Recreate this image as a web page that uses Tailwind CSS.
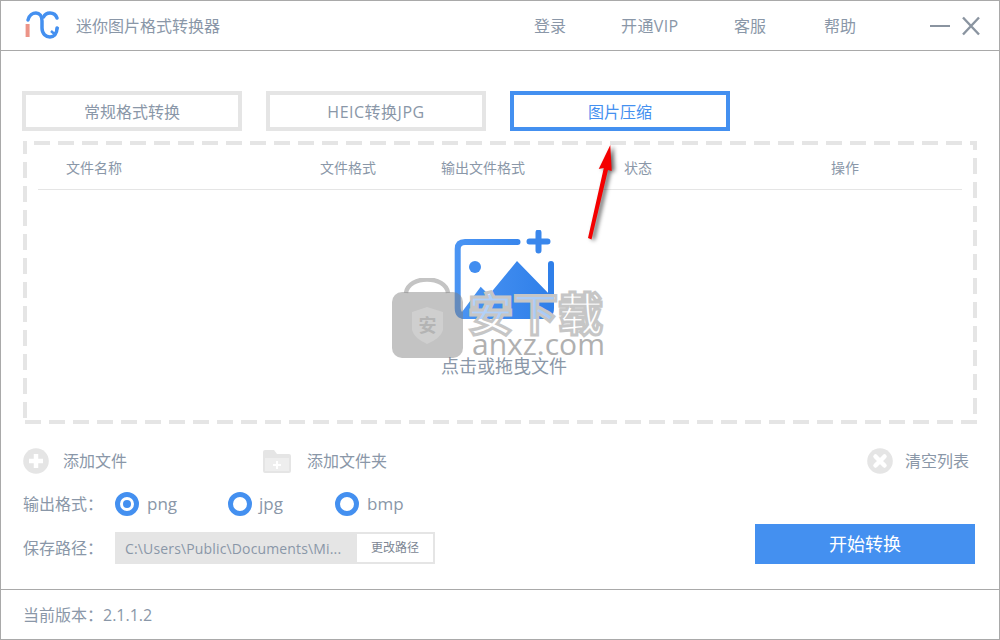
<!DOCTYPE html>
<html lang="zh"><head><meta charset="utf-8">
<script src="https://cdn.jsdelivr.net/npm/@tailwindcss/browser@4"></script>
<title>迷你图片格式转换器</title></head>
<body class="m-0 bg-white">
<div class="relative w-[1000px] h-[640px] overflow-hidden bg-white border border-[#a9a9a9] flex flex-col text-[#8a97a8] font-['Open_Sans','Noto_Sans_CJK_SC',sans-serif]">
  <!-- title bar -->
  <header class="h-[50px] shrink-0 flex items-center border-b border-[#a9a9a9] pl-[23px]">
    <svg class="w-[36px] h-[30px] -mt-[1px]" viewBox="0 0 36 30" fill="none">
      <path d="M3.600 14V27" stroke="#ec9488" stroke-width="4"/>
      <path d="M4 10C5 5 9 3 12 3C15.500 3 18 6 18 11V18C18 24 22 27 26 27C30 27 33 24 33 18" stroke="#4490f0" stroke-width="3.500" stroke-linecap="round"/>
      <path d="M19.500 7C21 4 24 3 26 3C29 3 32 5 33 8" stroke="#4490f0" stroke-width="3.500" stroke-linecap="round"/>
      <path d="M27 21L31 24.500L34 17" stroke="#4490f0" stroke-width="2.500"/>
    </svg>
    <span class="ml-[16px] text-[16px] leading-[24px] w-[150px] whitespace-nowrap">迷你图片格式转换器</span>
    <nav class="ml-[308px] flex text-[16px] leading-[24px] whitespace-nowrap">
      <span class="w-[87px]">登录</span><span class="w-[113px] tracking-[0.4px]">开通VIP</span><span class="w-[90px]">客服</span><span class="w-[106px]">帮助</span>
    </nav>
    <svg class="w-[20px] h-[20px]" viewBox="0 0 20 20"><path d="M0 10H20" stroke="#8a94a0" stroke-width="2"/></svg>
    <svg class="w-[20px] h-[20px] ml-[11px]" viewBox="0 0 20 20"><path d="M2 1.500L18 18.500M18 1.500L2 18.500" stroke="#8a94a0" stroke-width="2.400"/></svg>
  </header>

  <main class="flex-1 relative pt-[40px] pl-[21px]">
    <div class="flex gap-[24px] text-[16px]">
      <div class="w-[220px] h-[40px] pt-[1px] border-4 border-[#e5e5e5] flex items-center justify-center">常规格式转换</div>
      <div class="w-[220px] h-[40px] pt-[1px] border-4 border-[#e5e5e5] flex items-center justify-center tracking-[0.5px]">HEIC转换JPG</div>
      <div class="w-[220px] h-[40px] pt-[1px] border-4 border-[#4490f0] flex items-center justify-center text-[#4490f0]">图片压缩</div>
    </div>

    <section class="relative mt-[10px] ml-[1px] w-[954px] h-[283px] flex flex-col">
      <svg class="absolute inset-0 w-[954px] h-[283px]" viewBox="0 0 954 283" fill="none" stroke="#e5e5e5" stroke-width="4" stroke-dasharray="16 8">
        <path d="M0 2H954" stroke-dashoffset="13"/>
        <path d="M952 0V283" stroke-dashoffset="7"/>
        <path d="M0 281H954" stroke-dashoffset="22"/>
        <path d="M2 0V283" stroke-dashoffset="3"/>
      </svg>
      <div class="mt-[15px] ml-[15px] mr-[15px] h-[34px] border-b border-[#e5e5e5] flex text-[14px] leading-[24px] whitespace-nowrap">
        <span class="ml-[28px] w-[254px]">文件名称</span><span class="w-[121px]">文件格式</span><span class="w-[183px]">输出文件格式</span><span class="w-[207px]">状态</span><span>操作</span>
      </div>
      <div class="flex-1 flex flex-col items-center pl-[8px]">
        <svg class="mt-[40px] w-[100px] h-[90px]" viewBox="0 0 100 90" fill="none">
          <defs><linearGradient id="g" x1="0" y1="0" x2="1" y2="0"><stop offset="0" stop-color="#4a94f3"/><stop offset="1" stop-color="#2f7fe9"/></linearGradient></defs>
          <path d="M63.500 12H11Q3.700 12 3.700 19V78Q3.700 86 11 86H90Q97 86 97 78V34" stroke="url(#g)" stroke-width="6" stroke-linecap="round"/>
          <path d="M75.500 11.500H93.500M84.500 2.500V20.500" stroke="#3a87ec" stroke-width="6" stroke-linecap="round"/>
          <circle cx="21" cy="37" r="6" fill="#418df0"/>
          <path d="M5 86L26.700 56.700L35 65L63 31L98 67V89H8Z" fill="url(#g)"/>
        </svg>
        <span class="mt-[34px] text-[18px] leading-[24px]">点击或拖曳文件</span>
      </div>
    </section>

    <div class="mt-[24px] ml-[1px] h-[26px] flex items-center whitespace-nowrap text-[16px]">
      <svg class="w-[26px] h-[26px]" viewBox="0 0 26 26"><circle cx="13" cy="13" r="12.800" fill="#e5e5e5"/><path d="M13 6V20M6 13H20" stroke="#fff" stroke-width="4.500"/></svg>
      <span class="ml-[14px] w-[200px]">添加文件</span>
      <svg class="w-[28px] h-[23px]" viewBox="0 0 28 23"><path d="M0 2Q0 0 2 0H11L14 4H26Q28 4 28 6V21Q28 23 26 23H2Q0 23 0 21Z" fill="#e5e5e5"/><path d="M2 8H26V21H2Z" fill="#eeeeee"/><path d="M14 11V19M10 15H18" stroke="#fff" stroke-width="2"/></svg>
      <span class="ml-[16px] w-[560px]">添加文件夹</span>
      <svg class="w-[26px] h-[26px]" viewBox="0 0 26 26"><circle cx="13" cy="13" r="12.800" fill="#e5e5e5"/><path d="M8.500 8.500L17.500 17.500M17.500 8.500L8.500 17.500" stroke="#fff" stroke-width="4.500" stroke-linecap="round"/></svg>
      <span class="ml-[12px]">清空列表</span>
    </div>

    <div class="mt-[18px] ml-[1px] flex items-center h-[24px] text-[16px] whitespace-nowrap">
      <span class="w-[92px]">输出格式：</span>
      <span class="w-[24px] h-[24px] rounded-full border-[5px] border-[#4490f0] flex items-center justify-center"><span class="w-[8px] h-[8px] rounded-full bg-[#4490f0]"></span></span>
      <span class="ml-[8px] w-[81px] text-[17px]">png</span>
      <span class="w-[24px] h-[24px] rounded-full border-[5px] border-[#4490f0]"></span>
      <span class="ml-[7px] w-[76px] text-[17px]">jpg</span>
      <span class="w-[24px] h-[24px] rounded-full border-[5px] border-[#4490f0]"></span>
      <span class="ml-[8px] text-[17px]">bmp</span>
    </div>

    <div class="mt-[16px] ml-[1px] flex items-center h-[32px] whitespace-nowrap">
      <span class="w-[92px] text-[16px]">保存路径：</span>
      <div class="w-[320px] h-[32px] bg-[#e5e5e5] flex items-center pl-[10px] pr-[2px] py-[2px] text-[14px] tracking-[0.15px]">
        <span class="w-[232px]">C:\Users\Public\Documents\Mi...</span>
        <span class="w-[76px] h-[28px] bg-white flex items-center justify-center text-[12px] tracking-normal text-[#7d8794]">更改路径</span>
      </div>
      <div class="ml-[320px] w-[220px] h-[40px] -mt-[8px] bg-[#4490f0] text-white text-[18px] flex items-center justify-center">开始转换</div>
    </div>
  </main>

  <footer class="h-[50px] shrink-0 border-t border-[#a9a9a9] pl-[22px] flex items-center text-[16px] whitespace-nowrap">当前版本：2.1.1.2</footer>

  <!-- red arrow annotation -->
  <svg class="absolute left-[569px] top-[130px] w-[60px] h-[120px] drop-shadow-[3px_1px_2px_rgba(0,0,0,0.6)]" viewBox="0 0 60 120">
    <path d="M40.300 14L28.700 38L33.800 37L18 107L21.500 108.500L38 39L41.700 40Z" fill="#f40000"/>
  </svg>

  <!-- watermark -->
  <div class="absolute left-[390px] top-[277px] w-[220px] h-[90px]">
    <svg class="absolute left-0 top-0 w-[72px] h-[82px]" viewBox="0 0 72 82">
      <path d="M15 15C17 -3 55 -3 57 15" fill="none" stroke="#c4c4c4" stroke-width="4.500"/>
      <rect x="1" y="14" width="71" height="66" rx="10" fill="#808080" fill-opacity=".47"/>
      <path d="M21 34L36 29L52 34V52Q50 60 36 66Q23 60 21 52Z" fill="#fff" fill-opacity=".2"/>
      <text x="36.500" y="54" text-anchor="middle" font-size="18" font-weight="700" font-family="Noto Sans CJK SC" fill="#b4b4b4">安</text>
    </svg>
    <span class="absolute left-[77px] top-[16px] text-[45px] leading-[40px] font-bold whitespace-nowrap text-white/60 [-webkit-text-stroke:3px_#c6c6c6]">安下载</span>
    <span class="absolute left-[81px] top-[52px] text-[30px] leading-[28px] whitespace-nowrap text-[#b0b0b0]">anxz.com</span>
  </div>
</div>
</body></html>
